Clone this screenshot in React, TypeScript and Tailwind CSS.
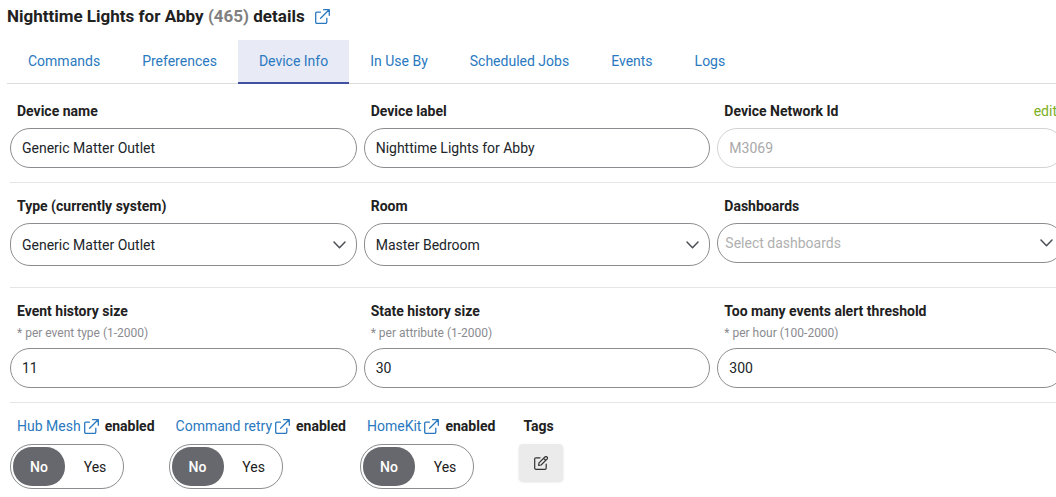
import { useState } from "react";
import type { ReactNode } from "react";

const tabs = [
  "Commands",
  "Preferences",
  "Device Info",
  "In Use By",
  "Scheduled Jobs",
  "Events",
  "Logs",
];

const fieldStyle =
  "w-full rounded-[20px] border border-[#8c8d90] bg-white pl-[11px] text-sm text-[#212529] disabled:border-[#d3d3d4] disabled:text-[#a9a9a9]";

function ExternalIcon() {
  return (
    <svg
      className="size-[15px] shrink-0"
      viewBox="0 0 15 15"
      fill="none"
      stroke="currentColor"
      strokeWidth="1.3"
      strokeLinecap="round"
      strokeLinejoin="round"
    >
      <path d="M5.4 3.2H1.9a1.2 1.2 0 0 0-1.2 1.2v8.7a1.2 1.2 0 0 0 1.2 1.2h8.7a1.2 1.2 0 0 0 1.2-1.2V9.2" />
      <path d="M5.6 9.2 14.1.8M8.6.7h5.7v5.6" />
    </svg>
  );
}

function PencilIcon() {
  return (
    <svg
      className="size-[14px]"
      viewBox="0 0 14 14"
      fill="none"
      stroke="currentColor"
      strokeWidth="1.2"
      strokeLinecap="round"
      strokeLinejoin="round"
    >
      <path d="M6 1.8H2A1.3 1.3 0 0 0 .7 3.1V12A1.3 1.3 0 0 0 2 13.3h8.9a1.3 1.3 0 0 0 1.3-1.3V8" />
      <path d="M5 6.9 10.9 1a1.4 1.4 0 0 1 2.1 2.1L7.1 9l-2.5.5L5 6.9ZM9.6 2.3l2.1 2.1" />
    </svg>
  );
}

function Field({
  id,
  label,
  hint,
  action,
  children,
}: {
  id: string;
  label: string;
  hint?: string;
  action?: ReactNode;
  children: ReactNode;
}) {
  return (
    <div className="flex flex-col gap-[7px]">
      <div className="px-[7px]">
        <div className="flex justify-between text-sm">
          <label htmlFor={id} className="font-bold">
            {label}
          </label>
          {action}
        </div>
        {hint && <p className="mt-1 text-xs text-[#8a8b90]">{hint}</p>}
      </div>
      {children}
    </div>
  );
}

function TextField({
  id,
  label,
  value,
  hint,
  disabled,
  action,
}: {
  id: string;
  label: string;
  value: string;
  hint?: string;
  disabled?: boolean;
  action?: ReactNode;
}) {
  return (
    <Field id={id} label={label} hint={hint} action={action}>
      <input
        id={id}
        type="text"
        defaultValue={value}
        disabled={disabled}
        className={`h-10 ${fieldStyle}`}
      />
    </Field>
  );
}

function SelectField({
  id,
  label,
  value,
  empty,
}: {
  id: string;
  label: string;
  value: string;
  empty?: boolean;
}) {
  return (
    <Field id={id} label={label}>
      <div className="relative">
        <select
          id={id}
          className={`appearance-none ${
            empty
              ? "block h-10 w-full rounded-[20px] border border-[#8c8d90] bg-white pl-[7px] text-sm text-[#b0b0b0]"
              : `block h-[43px] ${fieldStyle}`
          }`}
        >
          <option>{value}</option>
        </select>
        <svg
          className="pointer-events-none absolute inset-y-0 right-[11px] my-auto h-2 w-[13px] text-[#4b5057]"
          viewBox="0 0 13 8"
          fill="none"
          stroke="currentColor"
          strokeWidth="1.5"
          strokeLinecap="round"
          strokeLinejoin="round"
        >
          <path d="m1 1 5.5 5.7L12 1" />
        </svg>
      </div>
    </Field>
  );
}

function Toggle({ name, label }: { name: string; label: string }) {
  const [on, setOn] = useState("No");

  return (
    <fieldset className="relative">
      <legend className="mb-2 flex items-center pl-[7px] text-sm">
        <a href="#" className="flex items-center gap-[3px] text-[#2a79c0]">
          {label}
          <ExternalIcon />
        </a>
        <span className="ml-1.5 font-bold">enabled</span>
      </legend>
      <div className="inline-flex gap-1 rounded-[22px] border border-[#8c8d90] p-0.5">
        {["No", "Yes"].map((option) => (
          <label key={option} className="cursor-pointer">
            <input
              type="radio"
              name={name}
              value={option}
              checked={on === option}
              onChange={() => setOn(option)}
              className="peer sr-only"
            />
            <span className="flex h-[39px] w-[52px] items-center justify-center rounded-[19px] text-sm peer-checked:bg-[#67686d] peer-checked:font-medium peer-checked:text-white">
              {option}
            </span>
          </label>
        ))}
      </div>
    </fieldset>
  );
}

export default function App() {
  const [active, setActive] = useState("Device Info");

  return (
    <main className="overflow-x-hidden bg-white pb-2 font-[Roboto,sans-serif] text-[#212121]">
      <header className="flex items-center gap-2.5 px-[7px] pt-1 text-[#2a79c0]">
        <h1 className="text-[17px] leading-6 font-bold text-[#212121]">
          Nighttime Lights for Abby <span className="text-[#808080]">(465)</span>{" "}
          details
        </h1>
        <a href="#" aria-label="Open device">
          <ExternalIcon />
        </a>
      </header>

      <nav className="mt-3 ml-[7px] flex border-b border-[#dcdcdc]">
        {tabs.map((tab) => (
          <button
            key={tab}
            type="button"
            onClick={() => setActive(tab)}
            className={`-mb-px h-11 border-b-2 px-[21px] pb-px text-sm text-[#2a79c0] ${
              active === tab
                ? "border-[#3f51a0] bg-[#e8eaf6]"
                : "border-transparent"
            }`}
          >
            {tab}
          </button>
        ))}
      </nav>

      {/* the last column runs a little past the window edge */}
      <form className="-mr-2 ml-[10px] divide-y divide-[#e6e6e6]">
        <section className="grid grid-cols-3 gap-[7px] pt-[17px] pb-[14px]">
          <TextField id="name" label="Device name" value="Generic Matter Outlet" />
          <TextField id="label" label="Device label" value="Nighttime Lights for Abby" />
          <TextField
            id="dni"
            label="Device Network Id"
            value="M3069"
            disabled
            action={
              <a href="#" className="text-[#7cb01c]">
                edit
              </a>
            }
          />
        </section>

        <section className="grid grid-cols-3 gap-[7px] pt-[13px] pb-[21px]">
          <SelectField
            id="type"
            label="Type (currently system)"
            value="Generic Matter Outlet"
          />
          <SelectField id="room" label="Room" value="Master Bedroom" />
          <SelectField
            id="dashboards"
            label="Dashboards"
            value="Select dashboards"
            empty
          />
        </section>

        <section className="grid grid-cols-3 gap-[7px] pt-[13px] pb-[14px]">
          <TextField
            id="events"
            label="Event history size"
            hint="* per event type (1-2000)"
            value="11"
          />
          <TextField
            id="states"
            label="State history size"
            hint="* per attribute (1-2000)"
            value="30"
          />
          <TextField
            id="threshold"
            label="Too many events alert threshold"
            hint="* per hour (100-2000)"
            value="300"
          />
        </section>

        <section className="flex gap-[14px] pt-[13px]">
          <Toggle name="mesh" label="Hub Mesh" />
          <Toggle name="retry" label="Command retry" />
          <Toggle name="homekit" label="HomeKit" />
          <div className="ml-[10px]">
            <h2 className="mb-2 pl-1 text-sm font-bold">Tags</h2>
            <button
              type="button"
              aria-label="Edit tags"
              className="flex h-[37px] w-11 items-center justify-center rounded bg-[#ebebeb] text-[#333333] shadow"
            >
              <PencilIcon />
            </button>
          </div>
        </section>
      </form>
    </main>
  );
}
